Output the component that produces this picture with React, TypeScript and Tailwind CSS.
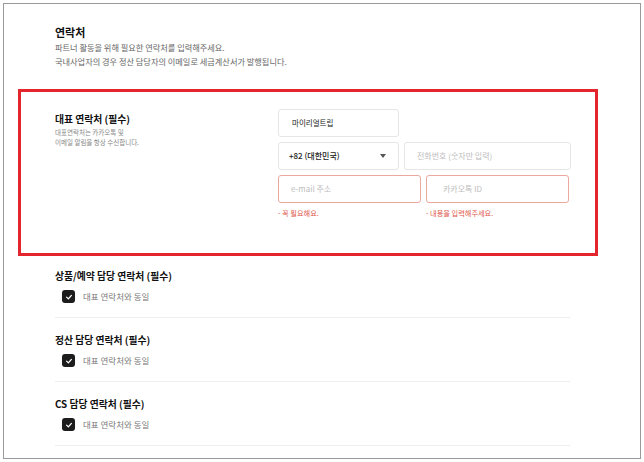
import { FC } from "react";

const font = { fontFamily: '"Noto Sans CJK KR", "Noto Sans", sans-serif' };

const CheckBox: FC = () => (
  <span className="flex h-[13px] w-[13px] items-center justify-center rounded-[3px] bg-[#1c1c1c]">
    <svg width="8" height="8" viewBox="0 0 10 10" fill="none">
      <path d="M2 5.2 L4.2 7.3 L8 3" stroke="white" strokeWidth="1.6" strokeLinecap="round" strokeLinejoin="round" />
    </svg>
  </span>
);

const sections = ["상품/예약 담당 연락처 (필수)", "정산 담당 연락처 (필수)", "CS 담당 연락처 (필수)"];

const App: FC = () => {
  return (
    <div className="h-[462px] w-[644px] bg-white p-[3px]" style={font}>
      <div className="h-full border border-[#9a9a9a] pt-[21px]">
        <div className="pl-[51px]">
          <h2 className="text-[11px] font-bold leading-[14px] text-[#111]">연락처</h2>
          <p className="mt-[1px] text-[8.2px] leading-[14px] text-[#666]">
            파트너 활동을 위해 필요한 연락처를 입력해주세요.
            <br />
            국내사업자의 경우 정산 담당자의 이메일로 세금계산서가 발행됩니다.
          </p>
        </div>

        <div className="ml-[14px] mt-[21px] flex h-[167px] w-[580px] border-[3px] border-[#e4252d]">
          <div className="w-[257px] pl-[34px] pt-[20px]">
            <h3 className="text-[9.8px] font-bold leading-[14px] text-[#111]">대표 연락처 (필수)</h3>
            <p className="mt-[2px] text-[6.5px] leading-[9.5px] text-[#888]">
              대표연락처는 카카오톡 및
              <br />
              이메일 알림을 항상 수신합니다.
            </p>
          </div>
          <div className="flex w-[293px] flex-col gap-[5px] pt-[17px]">
            <div className="flex h-[28px] w-[121px] items-center rounded-[3px] border border-[#e6e6e6] pl-[13px] text-[7.5px] text-[#222]">
              마이리얼트립
            </div>
            <div className="flex gap-[5px]">
              <div className="flex h-[28px] w-[121px] items-center justify-between rounded-[3px] border border-[#e6e6e6] pl-[10px] pr-[12px] text-[8px] font-medium text-[#222]">
                <span>+82 (대한민국)</span>
                <svg width="6" height="4" viewBox="0 0 6 4">
                  <path d="M0 0 L6 0 L3 4 Z" fill="#555" />
                </svg>
              </div>
              <div className="flex h-[28px] w-[167px] items-center rounded-[3px] border border-[#e6e6e6] pl-[12px] text-[8px] text-[#bdbdbd]">
                전화번호 (숫자만 입력)
              </div>
            </div>
            <div className="flex gap-[5px]">
              <div className="flex w-[143px] flex-col">
                <div className="flex h-[28px] items-center rounded-[3px] border border-[#eaa89f] pl-[12px] text-[8px] text-[#bdbdbd]">
                  e-mail 주소
                </div>
                <span className="mt-[5px] text-[7.2px] leading-[10px] text-[#e0564a]">- 꼭 필요해요.</span>
              </div>
              <div className="flex w-[143px] flex-col">
                <div className="flex h-[28px] items-center rounded-[3px] border border-[#eaa89f] pl-[16px] text-[8px] text-[#bdbdbd]">
                  카카오톡 ID
                </div>
                <span className="mt-[5px] text-[7.2px] leading-[10px] text-[#e0564a]">- 내용을 입력해주세요.</span>
              </div>
            </div>
          </div>
        </div>

        <div className="ml-[51px] w-[515px]">
          {sections.map((title, i) => (
            <div
              key={i}
              className={`border-b border-[#eeeeee] pb-[13.5px] ${i === 0 ? "pt-[13px]" : "pt-[15px]"}`}
            >
              <h3 className="text-[9.8px] font-bold leading-[14px] text-[#111]">{title}</h3>
              <div className="mt-[6.5px] flex h-[14px] items-center gap-[8px] pl-[7px]">
                <CheckBox />
                <span className="text-[8.5px] text-[#777]">대표 연락처와 동일</span>
              </div>
            </div>
          ))}
        </div>
      </div>
    </div>
  );
};

export default App;
